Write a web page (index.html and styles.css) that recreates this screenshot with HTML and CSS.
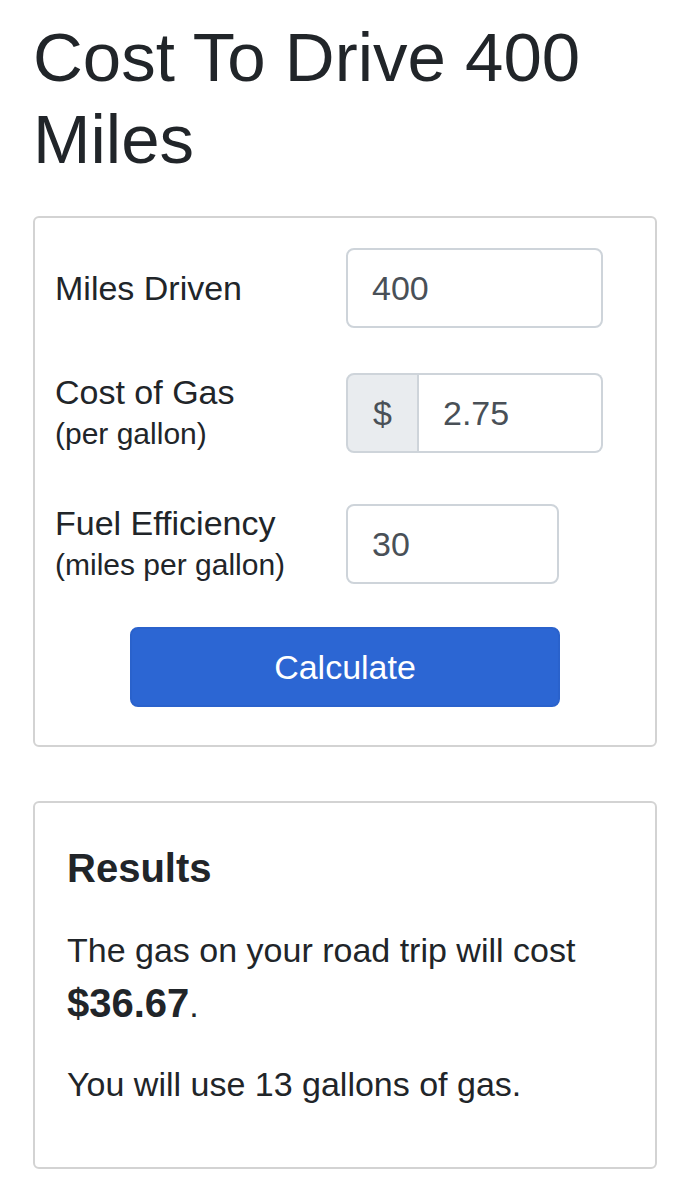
FILE: index.html
```html
<!DOCTYPE html>
<html lang="en">
<head>
<meta charset="utf-8">
<title>Cost To Drive 400 Miles</title>
<link rel="stylesheet" href="styles.css">
</head>
<body>
<main class="page">
  <h1 class="title">Cost To Drive 400 Miles</h1>

  <form class="card calc">
    <div class="row">
      <label class="label" for="miles">Miles Driven</label>
      <input class="field field-wide" id="miles" type="text" value="400">
    </div>
    <div class="row">
      <label class="label" for="cost">Cost of Gas<small>(per gallon)</small></label>
      <div class="group">
        <span class="addon">$</span>
        <input class="field" id="cost" type="text" value="2.75">
      </div>
    </div>
    <div class="row row-last">
      <label class="label" for="mpg">Fuel Efficiency<small>(miles per gallon)</small></label>
      <input class="field field-narrow" id="mpg" type="text" value="30">
    </div>
    <button class="calc-btn" type="button">Calculate</button>
  </form>

  <section class="card results">
    <h5 class="results-title">Results</h5>
    <p class="result-text">The gas on your road trip will cost <strong class="amount">$36.67</strong>.</p>
    <p class="result-text">You will use 13 gallons of gas.</p>
  </section>
</main>
</body>
</html>
```
FILE: styles.css
```css
body {
  margin: 0;
  background: #fff;
  color: #212529;
  font-family: "Liberation Sans", Arial, Helvetica, sans-serif;
}

.page {
  padding: 17px 33px 0;
}

.title {
  margin: 0 0 35px;
  font-size: 69px;
  line-height: 82px;
  font-weight: 400;
}

.card {
  border: 2px solid #d3d3d3;
  border-radius: 6px;
  background: #fff;
}

.calc {
  display: flex;
  flex-direction: column;
  gap: 43px;
  padding: 30px 20px 38px;
  margin: 0;
}

.row {
  display: grid;
  grid-template-columns: 291px 1fr;
  align-items: center;
}

.row-last {
  margin-top: 4px;
}

.label {
  font-size: 34px;
  line-height: 42px;
}

.label small {
  display: block;
  font-size: 30px;
  line-height: 42px;
}

.field {
  box-sizing: border-box;
  height: 80px;
  margin: 0;
  padding: 0 24px;
  border: 2px solid #ced4da;
  border-radius: 8px;
  background: #fff;
  color: #495057;
  font-family: "Liberation Sans", Arial, Helvetica, sans-serif;
  font-size: 34px;
  outline: none;
}

.field-wide {
  width: 257px;
}

.field-narrow {
  width: 213px;
}

.group {
  display: flex;
  width: 257px;
  height: 80px;
}

.addon {
  box-sizing: border-box;
  width: 73px;
  display: flex;
  align-items: center;
  justify-content: center;
  background: #e9ecef;
  border: 2px solid #ced4da;
  border-radius: 8px 0 0 8px;
  color: #495057;
  font-size: 34px;
}

.group .field {
  flex: 1;
  min-width: 0;
  border-left: 0;
  border-radius: 0 8px 8px 0;
}

.calc-btn {
  align-self: center;
  width: 430px;
  height: 80px;
  margin-top: -2px;
  border: 2px solid #2a62cc;
  border-radius: 8px;
  background: #2c66d3;
  color: #fff;
  font-family: "Liberation Sans", Arial, Helvetica, sans-serif;
  font-size: 34px;
  cursor: pointer;
}

.results {
  margin-top: 54px;
  padding: 41px 32px 57px;
}

.results-title {
  margin: 0 0 33px;
  font-size: 40px;
  line-height: 48px;
  font-weight: 700;
}

.result-text {
  margin: 0;
  font-size: 34px;
  line-height: 51px;
}

.result-text + .result-text {
  margin-top: 28px;
}

.amount {
  font-size: 40px;
  line-height: 54px;
  font-weight: 700;
}
```
